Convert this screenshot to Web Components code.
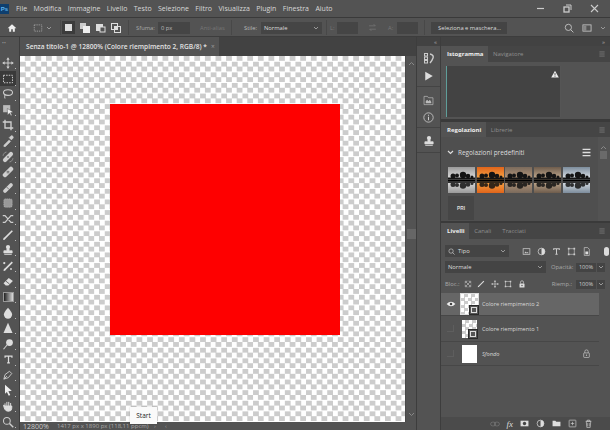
<!DOCTYPE html>
<html><head><meta charset="utf-8"><style>
html,body{margin:0;padding:0;background:#535353;overflow:hidden}
body{width:610px;height:430px;font-family:"Open Sans","Liberation Sans",sans-serif;color:#ddd}
</style></head><body><ps-app></ps-app>
<script>
const I={
move:'<path d="M8 1v14M1 8h14" stroke-width="1.300"/><path d="M8 .5 5.800 3.500h4.400zM8 15.500l-2.200-3h4.400zM.5 8l3-2.200v4.400zM15.500 8l-3-2.200v4.400z" fill="#cfcfcf" stroke="none"/>',
marq:'<rect x="2" y="3" width="12" height="10" stroke-dasharray="2 1.500" stroke-width="1.300"/>',
lasso:'<ellipse cx="8" cy="6" rx="6" ry="3.800" stroke-width="1.400"/><path d="M4 9q-1 3 0 5" stroke-width="1.300"/>',
sel:'<rect x="1.500" y="1.500" width="9.500" height="9.500" fill="#bbb" stroke="none"/><path d="M7 6l8 4.500-3.500 1 2 3.500-1.500.8-2-3.500-2.500 2.200z" fill="#f0f0f0" stroke="#444" stroke-width=".6"/>',
crop:'<path d="M4 1v11h11M1 4h11v11" stroke-width="1.800"/>',
drop:'<path d="M2.500 13.500l7-7 2 2-7 7h-2zM9.500 3.500l3 3 2-2a1.300 1.300 0 0 0-3-3z" fill="#ccc" stroke-width=".6"/>',
heal:'<path d="M4 12 12 4" stroke-width="5.500" stroke-linecap="round"/><circle cx="8" cy="8" r="1.100" fill="#444" stroke="none"/><path d="M1.500 6a5 5 0 0 1 4.500-4.500M14.500 10a5 5 0 0 1-4.500 4.500" stroke-width="1" stroke-dasharray="1.500 1"/>',
brush:'<path d="M4 12 12 4" stroke-width="6" stroke-linecap="round"/><circle cx="7" cy="7" r=".8" fill="#444" stroke="none"/><circle cx="9" cy="9" r=".8" fill="#444" stroke="none"/><circle cx="9" cy="7" r=".8" fill="#444" stroke="none"/><circle cx="7" cy="9" r=".8" fill="#444" stroke="none"/>',
band:'<path d="M4 12 12 4" stroke-width="5" stroke-linecap="round"/><path d="M6 6.500l3.500 3.500" stroke="#555" stroke-width="1"/>',
stamp:'<rect x="2.500" y="2.500" width="11" height="11" rx="2" fill="#999" stroke="#bbb" stroke-dasharray="1.500 1"/>',
swap:'<path d="M1 3.500h3l8 9h3M1 12.500h3l8-9h3" stroke-width="1.600"/>',
pen2:'<path d="M1.500 14.500q0-3 2-3.500L13 1.500l1.500 1.500L5 12.500q-1 2-3.500 2z" fill="#ddd" stroke="none"/>',
clone:'<circle cx="8" cy="4" r="2.800" fill="#ddd" stroke="none"/><path d="M6.500 6h3v3h4v3H2.500V9h4zM3 14h10" fill="#ddd" stroke="#ddd"/>',
hist:'<path d="M2 14.500q0-3 2-3.500L13 2l1.500 1.500-9 9q-1 2-3.500 2z" fill="#ddd" stroke="none"/><circle cx="3" cy="4" r="1.500" fill="#ddd" stroke="none"/><circle cx="12" cy="12" r="1.200" fill="#ddd" stroke="none"/>',
eraser:'<path d="M2 11l7-7 5.500 4-6 6H5z" fill="#ddd" stroke="none"/><path d="M5 8l5 4" stroke="#444"/>',
blur:'<path d="M8 1q5.500 6 5.500 9a5.500 5.500 0 0 1-11 0q0-3 5.500-9z" fill="#ddd" stroke="none"/>',
sharp:'<path d="M8 1l6 13.500H2z" fill="#ddd" stroke="none"/>',
smudge:'<circle cx="10" cy="6" r="4.500" fill="#ddd" stroke="none"/><path d="M7 9l-5 6" stroke-width="1.500"/>',
path:'<path d="M2.500 13.500l1.500-6L10 3l3 3-4.500 5.500zM2.500 13.500l4-4" stroke-width="1.200"/>',
arrow:'<path d="M4 1l9 8-4.500.5 2.500 5-2 1-2.500-5L4 13z" fill="#eee" stroke="none"/>',
hand:'<path d="M4 9V4.500M6.500 8V2.500M9 8V2.500M11.500 8.500V4M4 8 2 7l1.500 5Q5 15 8.500 15q4.500 0 4.500-4V8H4z" fill="#ddd" stroke="#ddd" stroke-width="1.300"/>',
zoom:'<circle cx="6.500" cy="6.500" r="4.500" stroke-width="1.400"/><path d="M10 10l5 5" stroke-width="1.800"/>',
home:'<path d="M8 2 1 8.500h2.500V14h3.200v-4h2.600v4h3.200V8.500H15z" fill="#eee" stroke="none"/>',
search:'<circle cx="7" cy="7" r="5" stroke-width="1.300"/><path d="M10.500 10.500 15 15" stroke-width="1.400"/>',
win:'<rect x="1.500" y="3" width="13" height="10" stroke-width="1.300"/><rect x="2" y="4" width="5" height="8.500" fill="#888" stroke="none"/>',
eye:'<path d="M1 8q7-7 14 0q-7 7-14 0z" fill="#eee" stroke="none"/><circle cx="8" cy="8" r="2" fill="#444" stroke="none"/>',
lock:'<rect x="3" y="7" width="10" height="8" rx="1" stroke-width="1.200"/><path d="M5 7V4.500a3 3 0 0 1 6 0V7" stroke-width="1.200"/><circle cx="8" cy="11" r="1.200" fill="#ccc" stroke="none"/>',
lockf:'<rect x="3" y="7" width="10" height="8" rx="1" fill="#ddd" stroke="none"/><path d="M5 7V4.500a3 3 0 0 1 6 0V7" stroke-width="1.500"/><circle cx="8" cy="11" r="1.300" fill="#444" stroke="none"/>',
warn:'<path d="M8 1.500 15.500 15H.5z" fill="#eee" stroke="none"/><path d="M8 6v5M8 12.200v1.500" stroke="#333" stroke-width="1.500"/>',
play:'<path d="M2 1l12 7-12 7z" fill="#ddd" stroke="none"/>',
lib:'<path d="M1.500 14V2h5l1.500 2h6.500v10z" stroke-width="1"/><path d="M4 12V9l2-2 2 2 2-2 2 3v2z" fill="#bbb" stroke="none"/>',
info:'<circle cx="8" cy="8" r="6.800" stroke-width="1.200"/><path d="M8 7v5M8 4v1.600" stroke-width="1.500"/>',
hlist:'<path d="M1 2.500h14M1 8h14M1 13.500h14" stroke-width="2.400"/>',
img:'<rect x="2" y="3" width="12" height="10" stroke-width="1.300"/><path d="M4 11l2.500-3 2 2 1.500-1 2 2z" fill="#ccc" stroke="none"/>',
half:'<circle cx="8" cy="8" r="6" stroke-width="1.400"/><path d="M8 2a6 6 0 0 1 0 12z" fill="#ddd" stroke="none"/>',
T:'<path d="M3 5.500V3h10v2.500M8 3v10M6 13h4" stroke-width="1.800"/>',
xform:'<path d="M3 3h10v10H3z" stroke-width="1.100"/><path d="M1.500 1.500h3v3h-3zM11.500 1.500h3v3h-3zM1.500 11.500h3v3h-3zM11.500 11.500h3v3h-3z" fill="#ccc" stroke="none"/>',
doc:'<path d="M4 1h6l3 3v11H4z" stroke-width="1.200"/><rect x="6" y="8" width="5" height="5" fill="#ddd" stroke="none"/>',
chk:'<path d="M2 2h12v12H2z" stroke-width="1"/><path d="M2 2h4v4H2zM10 2h4v4h-4zM6 6h4v4H6zM2 10h4v4H2zM10 10h4v4h-4z" fill="#999" stroke="none"/>',
link:'<rect x="1" y="5" width="8" height="6" rx="3" stroke-width="1.200"/><rect x="7" y="5" width="8" height="6" rx="3" stroke-width="1.200"/>',
mask:'<rect x="1" y="3" width="14" height="10" fill="#ddd" stroke="none"/><circle cx="8" cy="8" r="3" fill="#444" stroke="none"/>',
folder:'<path d="M1 13V3h5l1.500 2H15v8z" fill="#ddd" stroke="none"/>',
plus:'<rect x="2" y="2" width="12" height="12" rx="1" stroke-width="1.200"/><path d="M8 5v6M5 8h6" stroke-width="1.200"/>',
trash:'<path d="M3 4h10M6 4V2h4v2M4 4l1 11h6l1-11z" stroke-width="1.200"/><path d="M6.500 7v6M9.500 7v6" stroke-width="1"/>',
swapH:'<path d="M2 5h11l-3-3M14 11H3l3 3" stroke-width="1.300"/>'
};
const svg=(n,s=12,c='#ccc',st='')=>`<svg viewBox="0 0 16 16" width="${s}" height="${s}" fill="none" stroke="${c}" style="display:block;flex:none;${st}">${I[n]}</svg>`;
const chev=(st='')=>`<svg width="6" height="6" viewBox="0 0 6 6" style="flex:none;${st}" fill="none" stroke="#999"><path d="M1 2l2 2 2-2"/></svg>`;
const def=(name,css,html)=>customElements.define(name,class extends HTMLElement{constructor(){super();const r=this.attachShadow({mode:'open'});r.innerHTML=`<style>${css}</style>`+(typeof html==='function'?html(this):html);}});

def('menu-bar',`:host{display:flex;align-items:center;height:18px;background:#535353;font-size:7px;color:#d8d8d8;border-bottom:1px solid #3a3a3a;box-sizing:border-box}
.ps{width:9px;height:10px;margin:0 5px 0 0;background:#0f3f6e;color:#5fb5ee;font:bold 6px "Liberation Sans",sans-serif;display:flex;align-items:center;justify-content:center;flex:none}
span{margin-right:6.400px}.w{margin-left:auto;display:flex;gap:18px;padding-right:11px;align-items:center}`,
`<div class="ps">Ps</div><span style="margin-left:2px">File</span><span>Modifica</span><span>Immagine</span><span>Livello</span><span>Testo</span><span>Selezione</span><span>Filtro</span><span>Visualizza</span><span>Plugin</span><span>Finestra</span><span>Aiuto</span>
<div class="w"><svg width="9" height="9" viewBox="0 0 9 9"><path d="M1 4.500h7" stroke="#ccc" stroke-width="1.200"/></svg><svg width="9" height="9" viewBox="0 0 9 9" fill="none" stroke="#ccc"><rect x="1" y="3" width="5" height="5" stroke-width="1.300"/><path d="M3 1h5v5"/></svg><svg width="9" height="9" viewBox="0 0 9 9" stroke="#ccc" stroke-width="1.100"><path d="M1 1l7 7M8 1 1 8"/></svg></div>`);

def('opt-bar',`:host{display:flex;align-items:center;height:19px;padding-top:1px;background:#535353;font-size:5.800px;color:#aaa;box-sizing:border-box;border-bottom:1px solid #3d3d3d}
.s{width:1px;height:15px;background:#484848;flex:none}
.box{background:#454545;height:12px;display:flex;align-items:center;padding:0 3px;box-sizing:border-box;color:#bbb;flex:none;white-space:nowrap}
.btn{width:13px;height:13px;display:flex;align-items:center;justify-content:center;flex:none}
.l{flex:none;white-space:nowrap}
.r{display:flex;align-items:center}`,
`<div style="width:7px;flex:none"></div>${svg('home',10,'#eee')}<div style="width:16px;flex:none"></div>${svg('marq',10,'#aaa')}${chev('margin:0 8px 0 3px')}<div class="s"></div>
<div class="btn" style="background:#3c3c3c;margin-left:1px"><div style="width:7px;height:7px;background:#ddd"></div></div><div class="btn" style="margin-left:3px"><svg width="10" height="10"><rect x="0" y="0" width="6" height="6" fill="#ccc"/><rect x="3" y="3" width="7" height="7" fill="#eee"/></svg></div><div class="btn" style="margin-left:3px"><svg width="10" height="10"><rect x="0" y="1" width="7" height="7" fill="#ddd"/><rect x="4" y="4" width="5" height="5" fill="#535353" stroke="#ddd"/></svg></div><div class="btn" style="margin-left:2px"><svg width="10" height="10" fill="none" stroke="#ddd"><rect x=".5" y=".5" width="6" height="6"/><rect x="3.500" y="3.500" width="6" height="6"/><rect x="3.500" y="3.500" width="3" height="3" fill="#ddd"/></svg></div><div class="s" style="margin-left:6px"></div>
<span class="l" style="margin-left:7px;width:22px">Sfuma:</span><div class="box" style="width:32px">0 px</div><span class="l" style="margin-left:10px;width:23px;color:#777">Anti-alias</span><div class="s" style="margin-left:8px"></div>
<span class="l" style="margin-left:12px;width:17px;color:#bbb">Stile:</span><div class="box" style="width:61px;justify-content:space-between;color:#ddd">Normale${chev()}</div><div class="s" style="margin-left:4px"></div>
<span class="l" style="margin-left:3px;width:7px;color:#777">L:</span><div class="box" style="width:21px"></div><span class="l" style="margin:0 11px 0 10px">${svg('swapH',9,'#777')}</span><span class="l" style="width:9px;color:#777">A:</span><div class="box" style="width:21px"></div><div class="s" style="margin-left:6px"></div>
<div class="box" style="width:76px;margin-left:6px;padding-left:7px;color:#ddd;background:#444">Seleziona e maschera...</div>
<div class="r" style="margin-left:auto;padding-right:4px;gap:8px">${svg('search',10,'#ccc')}${svg('win',10,'#ccc')}${chev()}</div>`);

def('tool-bar',`:host{display:flex;flex-direction:column;align-items:flex-start;width:20px;flex:none;background:#535353;padding-top:19.700px;gap:3px;box-sizing:border-box;overflow:hidden;border-right:1px solid #3d3d3d;position:relative}
.t{width:16px;height:12.600px;display:flex;align-items:center;justify-content:center;flex:none;position:relative}
.t i{position:absolute;right:0;bottom:0;width:1px;height:1px;background:#bbb}
.on{background:#3a3a3a;height:15px;margin:-1.200px 0}
.hd{position:absolute;left:2px;top:4px;font-size:5px;line-height:5px;color:#999;letter-spacing:0}`,
()=>`<div class="hd">••</div>`+['move','marq','lasso','sel','crop','drop','heal','brush','band','stamp','swap','pen2','clone','hist','eraser','grad','blur','sharp','smudge','T','path','arrow','hand','zoom'].map(n=>{
 if(n==='grad')return `<div class="t"><div style="width:11px;height:10px;background:linear-gradient(90deg,#222,#ddd);border:1px solid #999;box-sizing:border-box"></div><i></i></div>`;
 return `<div class="t ${n==='marq'?'on':''}">${svg(n,n==='T'?11:12,n==='T'?'#ddd':'#cfcfcf')}<i></i></div>`}).join(''));

def('doc-tab',`:host{display:flex;align-items:center;height:19px;background:#424242;font-size:6.600px;color:#e2e2e2;flex:none}
.t{background:#535353;height:19px;display:flex;align-items:center;padding:0 4px 0 6px;gap:4px;white-space:nowrap;font-weight:600}.x{color:#999;font-weight:400}`,
`<div class="t">Senza titolo-1 @ 12800% (Colore riempimento 2, RGB/8) *<span class="x">×</span></div>`);

def('art-canvas',`:host{display:flex;flex:1;min-height:0}
.c{flex:1;display:flex;align-items:flex-start;justify-content:flex-start;background-color:#fff;background-image:conic-gradient(#ccc 25%,#fff 0 50%,#ccc 0 75%,#fff 0);background-size:10.600px 10.600px;padding:48px 0 0 90px;box-sizing:border-box}
.r{width:230px;height:231px;background:#fe0000}
.sb{width:11px;background:#535353;flex:none;display:flex;flex-direction:column;align-items:center;border-left:1px solid #484848;box-sizing:border-box;padding-bottom:5px}
.th{width:9px;height:10px;background:#666;margin-top:163px}
`,`<div class="c"><div class="r"></div></div><div class="sb"><svg width="7" height="5" viewBox="0 0 7 5" style="margin-top:5px" fill="none" stroke="#888"><path d="M1 4l2.500-2.500L6 4"/></svg><div class="th"></div><svg width="7" height="5" viewBox="0 0 7 5" style="margin-top:auto" fill="none" stroke="#888"><path d="M1 1l2.500 2.500L6 1"/></svg></div>`);

def('status-bar',`:host{display:flex;align-items:center;height:8px;background:#535353;font-size:7px;color:#ccc;position:relative;flex:none;white-space:nowrap}
.z{margin-left:3px;width:34px;flex:none}.i{font-size:6px;color:#aaa;flex:none;width:97px}
.a{font-size:6px;color:#999;width:11px;flex:none}
.tip{position:absolute;left:110px;bottom:6px;width:27px;height:17px;background:#fafafa;color:#222;font-size:6.500px;display:flex;align-items:center;justify-content:center;box-shadow:0 0 2px #0003}`,
`<span class="z">12800%</span><span class="i">1417 px x 1890 px (118,11 ppcm)</span><span class="a">›</span><span class="a">‹</span><div class="tip">Start</div>`);

def('icon-dock',`:host{display:flex;flex-direction:column;width:23px;flex:none;background:#535353;border-left:1px solid #3d3d3d;border-right:1px solid #3d3d3d}
.top{height:9px;background:#424242;flex:none;display:flex;justify-content:flex-end;align-items:center;font-size:6px;line-height:6px;color:#aaa;padding-right:3px;box-sizing:border-box}
.g{display:flex;flex-direction:column;align-items:center;border-bottom:1px solid #444;box-sizing:border-box;flex:none}`,
`<div class="top">«</div>
<div class="g" style="height:41px;padding-top:7px;gap:7px"><svg width="10" height="11" viewBox="0 0 10 11" fill="none" stroke="#ccc"><rect x=".5" y=".5" width="3" height="2.500"/><rect x=".5" y="4" width="3" height="2.500"/><rect x=".5" y="7.500" width="3" height="2.500"/><path d="M6 1q4 1 3 4T6 10" stroke-width="1.400"/></svg>${svg('play',10,'#ddd')}</div>
<div class="g" style="height:41px;padding-top:8px;gap:6px">${svg('lib',11,'#bbb')}${svg('info',11,'#ccc')}</div>
<div class="g" style="height:25px;padding-top:7px">${svg('clone',12,'#ddd')}</div>`);

def('photo-thumb',`:host{display:block;width:27px;height:26px;flex:none;overflow:hidden}
svg{display:block}`,
h=>{const a=h.getAttribute('a'),b=h.getAttribute('b');
const trees='<g fill="#141414"><circle cx="5" cy="9" r="2.500"/><circle cx="9" cy="8.500" r="2"/><circle cx="15" cy="8" r="3.200"/><circle cx="20" cy="9" r="2.300"/><circle cx="24" cy="10" r="1.500"/><rect y="10.500" width="27" height="2"/></g>';
return `<svg width="27" height="26" viewBox="0 0 27 26"><defs><linearGradient id="g" x1="0" y1="0" x2="0" y2="1"><stop offset="0" stop-color="${a}"/><stop offset=".45" stop-color="${b}"/><stop offset=".55" stop-color="${b}"/><stop offset="1" stop-color="${a}"/></linearGradient></defs><rect width="27" height="26" fill="url(#g)"/>${trees}<rect y="12.500" width="27" height="1.500" fill="#000"/><g transform="matrix(1 0 0 -1 0 26.500)" opacity=".85">${trees}</g></svg>`});

def('layer-row',`:host{display:flex;align-items:center;border-bottom:1px solid #474747;font-size:5.600px;color:#d8d8d8;box-sizing:border-box;flex:none;width:158px}
:host([sel]){background:#666}
.e{width:19px;display:flex;justify-content:center;flex:none}.b{width:6px;height:6px;border-right:1px solid #5e5e5e;border-bottom:1px solid #5e5e5e}
.th{width:15px;height:18px;margin:0 5px 0 2px;flex:none;position:relative;background-color:#fff;background-image:conic-gradient(#ccc 25%,#fff 0 50%,#ccc 0 75%,#fff 0);background-size:7px 7px}
:host([sel]) .th{outline:1px solid #ddd;width:17px;height:20px;margin:0 4px 0 1px}
:host([plain]) .th{background:#fff}
.m{position:absolute;right:-1px;bottom:-1px;width:10px;height:10px;background:#555;border:1px solid #2a2a2a;display:flex;align-items:center;justify-content:center;box-sizing:border-box}
.n{flex:1}:host([plain]) .n{font-style:italic}
.l{margin-right:8px}`,
h=>{const p=h.hasAttribute('plain');return `<div class="e">${h.hasAttribute('sel')?svg('eye',10,'#eee'):'<div class="b"></div>'}</div><div class="th">${p?'':`<div class="m"><svg width="6" height="6" fill="none" stroke="#ddd"><rect x=".5" y=".5" width="5" height="5"/></svg></div>`}</div><div class="n"><slot></slot></div>${p?`<div class="l">${svg('lock',9,'#ccc')}</div>`:''}`});

def('panel-tabs',`:host{display:flex;background:#454545;font-size:6px;color:#8f8f8f;flex:none;height:16px}
.m{margin-left:auto;display:flex;align-items:center;padding:0 5px}`,
`<slot></slot><div class="m">${svg('hlist',6,'#777')}</div>`);

def('panel-tab',`:host{display:flex;align-items:center;padding:0 5px;white-space:nowrap}
:host([on]){background:#535353;color:#eee;font-weight:700;padding:0 4.500px 0 6px}`,`<slot></slot>`);

def('panel-col',`:host{display:flex;flex-direction:column;flex:1;min-width:0;background:#535353;overflow:hidden}
.top{height:9px;background:#424242;flex:none;display:flex;justify-content:flex-end;align-items:center;font-size:6px;line-height:6px;color:#aaa;padding-right:5px;box-sizing:border-box}
.sep{height:2px;background:#3a3a3a;flex:none}
.hist{height:57px;padding:4px 0 0 5px;box-sizing:border-box;flex:none}
.hg{height:51px;width:115px;background:#434343;display:flex;justify-content:flex-end;padding:4px 1px 0 0;box-sizing:border-box;border-left:1px solid #5f9e9a;border-right:1px solid #555}
.adj{height:84px;flex:none;display:flex;background:#4f4f4f}
.al{flex:1;min-width:0;display:flex;flex-direction:column}
.asb{width:12px;flex:none;display:flex;flex-direction:column;align-items:center;padding:8px 2px 0 0;box-sizing:border-box;background:#535353}
.asb div{width:7px;height:8px;background:#6a6a6a;margin-top:1px}
.ah{display:flex;align-items:center;height:30px;padding:0 7px 0 6px;font-size:6.400px;color:#ddd;gap:3px;flex:none}
.ah .g{margin-left:auto}
.th{display:flex;gap:1.700px;padding-left:7px}
.pr{margin:3px 0 0 7px;width:26px;height:24px;background:#464646;font:bold 4.800px "Liberation Sans",sans-serif;color:#ddd;display:flex;align-items:center;justify-content:center}
.lay{flex:1;display:flex;flex-direction:column;min-height:0}
.row{display:flex;align-items:center;height:12px;font-size:5.800px;color:#aaa;padding-left:4px;flex:none}
.dd{background:#444;height:12px;display:flex;align-items:center;padding:0 3px;box-sizing:border-box;justify-content:space-between;color:#ddd;flex:none}
.mini{background:#444;height:9px;width:20px;display:flex;align-items:center;justify-content:center;color:#ccc;font-size:5.600px;margin-left:4px;flex:none}
.sm{background:#444;height:9px;width:8px;margin-left:1px;display:flex;align-items:center;justify-content:center;flex:none}
.ic{display:flex;align-items:center;flex:none}
.list{flex:1;display:flex;flex-direction:column;padding-top:0;margin-top:3px}
.foot{height:13px;background:#4b4b4b;display:flex;align-items:center;justify-content:flex-end;gap:7px;padding-right:17px;flex:none}
`,
()=>`<div class="top">»</div>
<panel-tabs><panel-tab on>Istogramma</panel-tab><panel-tab>Navigatore</panel-tab></panel-tabs>
<div class="hist"><div class="hg">${svg('warn',8,'#eee')}</div></div>
<div class="sep" style="height:3px"></div>
<panel-tabs style="height:15px"><panel-tab on>Regolazioni</panel-tab><panel-tab>Librerie</panel-tab></panel-tabs>
<div class="adj"><div class="al"><div class="ah"><svg width="7" height="7" viewBox="0 0 7 7" fill="none" stroke="#ddd" stroke-width="1.200" style="margin-right:1px"><path d="M1 2l2.500 2.500L6 2"/></svg>Regolazioni predefiniti<span class="g">${svg('hlist',9,'#ddd')}</span></div>
<div class="th"><photo-thumb a="#9a9a9a" b="#e0e0e0"></photo-thumb><photo-thumb a="#e0641a" b="#f8a848"></photo-thumb><photo-thumb a="#7a6a5c" b="#b8987a"></photo-thumb><photo-thumb a="#6e5c4c" b="#c4ac90"></photo-thumb><photo-thumb a="#7c8c9c" b="#dfe5ea"></photo-thumb></div>
<div class="pr">PRI</div></div><div class="asb"><svg width="7" height="5" viewBox="0 0 7 5" fill="none" stroke="#888"><path d="M1 4l2.500-2.500L6 4"/></svg><div></div></div></div>
<div class="sep"></div>
<div class="lay"><panel-tabs><panel-tab on>Livelli</panel-tab><panel-tab>Canali</panel-tab><panel-tab style="padding-left:6px">Tracciati</panel-tab></panel-tabs>
<div class="row" style="margin-top:6px"><div class="dd" style="width:64px">${svg('search',7,'#ddd')}<span style="flex:1;margin-left:3px">Tipo</span>${chev()}</div><div class="ic" style="margin-left:12.500px;gap:6px">${svg('img',9)}${svg('half',9)}${svg('T',9)}${svg('xform',9)}${svg('doc',9)}</div><div style="margin-left:13px;width:5px;height:9px;border-radius:3px;background:#ddd;flex:none"></div></div>
<div class="row" style="margin-top:4px"><div class="dd" style="width:101px">Normale${chev()}</div><span style="margin-left:5px;width:21px;flex:none">Opacità:</span><div class="mini">100%</div><div class="sm">${chev()}</div></div>
<div class="row" style="margin-top:5px"><span style="width:19px;flex:none">Bloc.:</span><div class="ic" style="gap:5.400px">${svg('chk',8,'#888')}${svg('pen2',8)}${svg('move',8)}${svg('xform',8)}${svg('lockf',8)}</div><span style="margin-left:auto;flex:none">Riemp.:</span><div class="mini">100%</div><div class="sm" style="margin-right:5px">${chev()}</div></div>
<div class="list"><layer-row sel style="height:23px">Colore riempimento 2</layer-row><layer-row style="height:26px">Colore riempimento 1</layer-row><layer-row plain style="height:24px">Sfondo</layer-row></div>
<div class="foot">${svg('link',10,'#777')}<span style="font:italic 9px 'Liberation Serif',serif;color:#ddd">fx</span>${svg('mask',9)}${svg('half',9)}${svg('folder',9)}${svg('plus',9)}${svg('trash',9)}</div></div>`);

def('ps-app',`:host{display:flex;flex-direction:column;width:610px;height:430px;overflow:hidden}
.main{flex:1;display:flex;min-height:0}
.mid{display:flex;flex-direction:column;width:396px;flex:none;background:#535353}`,
`<menu-bar></menu-bar><opt-bar></opt-bar><div class="main"><tool-bar></tool-bar><div class="mid"><doc-tab></doc-tab><art-canvas></art-canvas><status-bar></status-bar></div><icon-dock></icon-dock><panel-col></panel-col></div>`);
</script></body></html>
